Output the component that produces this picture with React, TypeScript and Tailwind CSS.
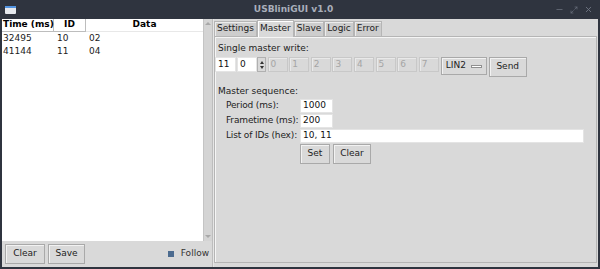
import { Minus, Maximize2, X } from 'lucide-react';

const font = { fontFamily: '"DejaVu Sans", sans-serif' };

const Btn = ({ label, className = '' }: { label: string; className?: string }) => (
  <div
    className={`h-[20px] flex items-center justify-center border border-[#a9a9a9] bg-[#d9d9d9] shadow-[inset_1px_1px_0_#f2f2f2] text-[9px] text-[#222] whitespace-nowrap ${className}`}
  >
    {label}
  </div>
);

const Entry = ({ value, className = '' }: { value: string; className?: string }) => (
  <div className={`h-[14px] bg-white border border-[#e4e4e4] flex items-center pl-[2px] text-[9px] text-[#111] whitespace-nowrap ${className}`}>
    {value}
  </div>
);

const App = () => {
  const tabs = ['Settings', 'Master', 'Slave', 'Logic', 'Error'];
  const bytes = ['0', '1', '2', '3', '4', '5', '6', '7'];

  return (
    <div className="w-[600px] h-[269px] flex flex-col bg-[#2f343f] overflow-hidden whitespace-nowrap" style={font}>
      {/* title bar */}
      <div className="h-[19px] flex items-center px-[5px]">
        <div className="w-[11px] h-[8px] flex flex-col bg-[#e6e9ee] rounded-[1px]">
          <div className="h-[2px] bg-[#5294e2]" />
        </div>
        <div className="flex-1 ml-[16px] text-center text-[9px] font-bold text-[#a9afbb]">USBliniGUI v1.0</div>
        <div className="flex items-center gap-[6px] text-[#6d7380] pr-[2px]">
          <Minus size={9} strokeWidth={2} />
          <Maximize2 size={8} strokeWidth={2} />
          <X size={9} strokeWidth={2.5} />
        </div>
      </div>

      {/* body */}
      <div className="flex-1 flex bg-[#d9d9d9] mx-[2px] mb-[2px]">
        {/* left panel */}
        <div className="w-[210px] flex flex-col">
          <div className="flex-1 flex">
            <div className="w-[201px] bg-white flex flex-col">
              <div className="h-[13px] flex items-center text-[9px] font-bold text-black">
                <div className="w-[52px] h-full pl-[1px] flex items-center border-r border-b border-[#bdbdbd]">Time (ms)</div>
                <div className="w-[32px] h-full flex items-center justify-center border-r border-b border-[#bdbdbd]">ID</div>
                <div className="flex-1 h-full flex items-center justify-center border-b border-[#e8e8e8]">Data</div>
              </div>
              {[
                ['32495', '10', '02'],
                ['41144', '11', '04'],
              ].map((r) => (
                <div key={r[0]} className="h-[13px] flex items-center text-[9px] text-[#222]">
                  <div className="w-[54px] pl-[1px]">{r[0]}</div>
                  <div className="w-[32px] pl-[1px]">{r[1]}</div>
                  <div className="flex-1 pl-[1px]">{r[2]}</div>
                </div>
              ))}
            </div>
            <div className="w-[9px] bg-[#d4d4d4] border-l border-[#c4c4c4] flex flex-col justify-between items-center py-[3px]">
              <div className="w-0 h-0 border-x-[3px] border-x-transparent border-b-[3px] border-b-[#a8a8a8]" />
              <div className="w-0 h-0 border-x-[3px] border-x-transparent border-t-[3px] border-t-[#a8a8a8]" />
            </div>
          </div>
          <div className="h-[26px] flex items-center px-[3px] gap-[3px]">
            <Btn label="Clear" className="w-[40px]" />
            <Btn label="Save" className="w-[37px]" />
            <div className="flex-1" />
            <div className="w-[6px] h-[6px] bg-[#4c6b8f] mr-[4px]" />
            <span className="text-[9px] text-[#333]">Follow</span>
          </div>
        </div>

        {/* sash */}
        <div className="w-[2px] border-l border-[#bdbdbd] bg-[#e6e6e6]" />

        {/* right panel */}
        <div className="flex-1 flex flex-col pt-[1px] text-[9px] text-[#222]">
          <div className="h-[16px] flex items-end">
            {tabs.map((t) => {
              const active = t === 'Master';
              return (
                <div
                  key={t}
                  className={
                    active
                      ? 'h-[17px] px-[2px] flex items-center bg-[#d9d9d9] border-l border-t border-r border-[#b5b5b5] shadow-[inset_1px_1px_0_#fff] -mb-[1px] relative z-10'
                      : 'h-[15px] px-[2px] flex items-center bg-[#cdcdcd] border-l border-t border-r border-[#b5b5b5] shadow-[inset_1px_1px_0_#ececec]'
                  }
                >
                  {t}
                </div>
              );
            })}
          </div>
          <div className="flex-1 border border-[#b5b5b5] shadow-[inset_1px_1px_0_#f5f5f5] mb-[4px] mr-[1px] flex flex-col">
            <div className="mt-[5px] ml-[3px] h-[12px] leading-[12px]">Single master write:</div>
            <div className="mt-[3px] flex items-start h-[18px]">
              <Entry value="11" className="w-[21px] h-[15px]" />
              <Entry value="0" className="w-[20px] h-[15px] ml-[1px]" />
              <div className="w-[9px] h-[15px] bg-[#d9d9d9] border border-[#b0b0b0] flex flex-col items-center justify-center gap-[2px]">
                <div className="w-0 h-0 border-x-[2px] border-x-transparent border-b-[3px] border-b-[#333]" />
                <div className="w-0 h-0 border-x-[2px] border-x-transparent border-t-[3px] border-t-[#333]" />
              </div>
              {bytes.map((b) => (
                <div
                  key={b}
                  className="w-[20px] h-[15px] ml-[1.6px] border border-[#c8c8c8] shadow-[inset_1px_1px_0_#e9e9e9] flex items-center pl-[2px] text-[#a5a5a5]"
                >
                  {b}
                </div>
              ))}
              <div className="ml-[2px] w-[46px] h-[18px] border border-[#a9a9a9] shadow-[inset_1px_1px_0_#f2f2f2] flex items-center justify-between px-[4px]">
                <span>LIN2</span>
                <div className="w-[11px] h-[3px] bg-[#d9d9d9] border border-[#8f8f8f] shadow-[inset_1px_1px_0_#fff]" />
              </div>
              <Btn label="Send" className="ml-[2px] w-[38px] h-[18px]" />
            </div>
            <div className="mt-[10px] ml-[3px] h-[12px] leading-[12px]">Master sequence:</div>
            <div className="mt-[2px] flex flex-col gap-[1px]">
              {[
                ['Period (ms):', '1000', 'w-[33px]'],
                ['Frametime (ms):', '200', 'w-[33px]'],
                ['List of IDs (hex):', '10, 11', 'w-[284px]'],
              ].map(([l, v, w]) => (
                <div key={l} className="flex items-center h-[14px]">
                  <div className="w-[85px] pl-[11px] tracking-[-0.15px]">{l}</div>
                  <Entry value={v} className={w} />
                </div>
              ))}
            </div>
            <div className="mt-[1px] ml-[85px] flex gap-[3px]">
              <Btn label="Set" className="w-[30px]" />
              <Btn label="Clear" className="w-[38px]" />
            </div>
          </div>
        </div>
      </div>
    </div>
  );
};

export default App;
